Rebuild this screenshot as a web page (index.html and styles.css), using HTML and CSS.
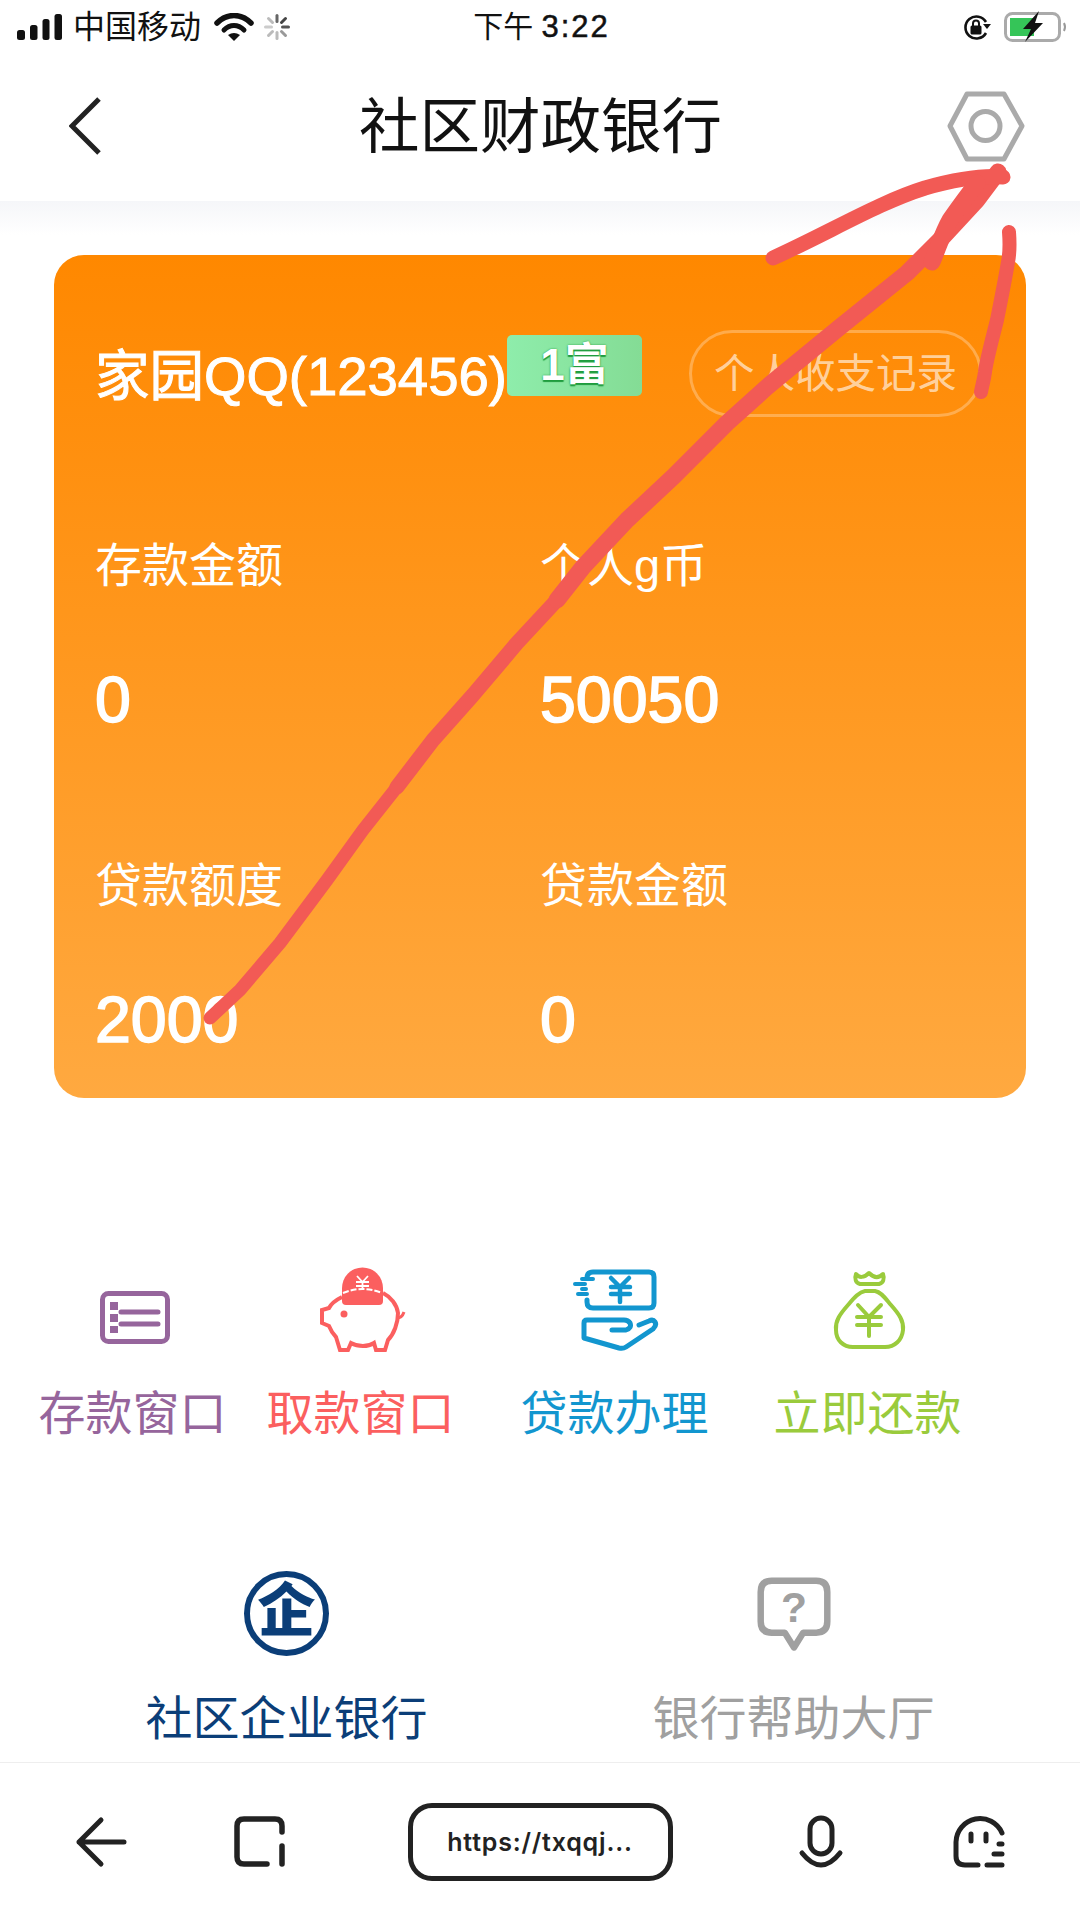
FILE: index.html
```html
<!DOCTYPE html>
<html lang="zh-CN">
<head>
    <meta charset="UTF-8">
    <meta name="viewport" content="width=device-width, initial-scale=1.0">
    <title>社区财政银行</title>
    <link rel="stylesheet" href="styles.css">
</head>
<body>
<div class="screen">
    <div class="status">
        <div class="status-left">
            <svg class="signal" width="45" height="28" viewBox="0 0 45 28" fill="#111">
                <rect x="0" y="17" width="8" height="10" rx="2.5"/>
                <rect x="13" y="12" width="7.5" height="15" rx="2.5"/>
                <rect x="25.5" y="6" width="7" height="21" rx="2.5"/>
                <rect x="37.5" y="1" width="7.5" height="26" rx="2.5"/>
            </svg>
            <span class="carrier">中国移动</span>
            <svg class="wifi" width="40" height="28" viewBox="0 0 40 28" fill="none" stroke="#111" stroke-linecap="round">
                <path d="M3 10C13 0 27 0 37 10" stroke-width="5.5"/>
                <path d="M10 17C16 11 24 11 30 17" stroke-width="5"/>
                <path d="M14 22Q20 18 26 22L20 28Z" fill="#111" stroke="none"/>
            </svg>
            <svg class="spin" width="26" height="26" viewBox="0 0 26 26" stroke-width="3" stroke-linecap="round">
                <line x1="13" y1="1.5" x2="13" y2="7.5" stroke="#666"/>
                <line x1="21.5" y1="4.5" x2="17.5" y2="8.5" stroke="#444"/>
                <line x1="24.5" y1="13" x2="18.5" y2="13" stroke="#555"/>
                <line x1="21.5" y1="21.5" x2="17.5" y2="17.5" stroke="#999"/>
                <line x1="13" y1="24.5" x2="13" y2="18.5" stroke="#bbb"/>
                <line x1="4.5" y1="21.5" x2="8.5" y2="17.5" stroke="#bbb"/>
                <line x1="1.5" y1="13" x2="7.5" y2="13" stroke="#ccc"/>
                <line x1="4.5" y1="4.5" x2="8.5" y2="8.5" stroke="#bbb"/>
            </svg>
        </div>
        <div class="clock">下午 <span class="clock-num">3:22</span></div>
        <div class="status-right">
            <svg width="30" height="28" viewBox="0 0 30 28" fill="none">
                <path d="M24 9A11 11 0 1 0 24 20" stroke="#111" stroke-width="2.6"/>
                <path d="M21 11L29 11L25 16Z" fill="#111"/>
                <rect x="8.5" y="12.5" width="11" height="9" rx="1.5" fill="#111"/>
                <path d="M11 13V10.5A3 3 0 0 1 17 10.5V13" stroke="#111" stroke-width="2"/>
            </svg>
            <svg class="battery" width="62" height="30" viewBox="0 0 62 30" fill="none">
                <rect x="1.5" y="1.5" width="54" height="27" rx="7" stroke="#aaa" stroke-width="3"/>
                <path d="M6 6H30V24H6Z" fill="#35c558"/>
                <path d="M60 11Q62 15 60 19" stroke="#999" stroke-width="2"/>
                <path d="M35 -1L19 17H27L21 30L39 11H31Z" fill="#111"/>
            </svg>
        </div>
    </div>

    <header class="nav">
        <svg class="nav-back" width="32" height="58" viewBox="0 0 32 58" fill="none">
            <path d="M30 2L3 29L30 56" stroke="#222" stroke-width="5"/>
        </svg>
        <h1 class="nav-title">社区财政银行</h1>
        <svg class="nav-gear" width="78" height="71" viewBox="0 0 78 71" fill="none" stroke="#aaa" stroke-width="5" stroke-linejoin="round">
            <path d="M20 3H57L75 35L57 68H20L3 35Z"/>
            <circle cx="38.5" cy="35" r="14.5"/>
        </svg>
    </header>

    <main class="content">
        <section class="card">
            <div class="card-head">
                <span class="card-name">家园QQ(123456)</span>
                <span class="rank">1富</span>
                <a class="record">个人收支记录</a>
            </div>
            <div class="stats">
                <div class="stat"><div class="stat-label">存款金额</div><div class="stat-value">0</div></div>
                <div class="stat"><div class="stat-label">个人g币</div><div class="stat-value">50050</div></div>
                <div class="stat"><div class="stat-label">贷款额度</div><div class="stat-value">2000</div></div>
                <div class="stat"><div class="stat-label">贷款金额</div><div class="stat-value">0</div></div>
            </div>
        </section>

        <div class="actions">
            <div class="action purple">
                <svg width="90" height="90" viewBox="0 0 90 90" fill="none" stroke="#96659c">
                    <rect x="14.5" y="28.5" width="65" height="48" rx="6" stroke-width="5"/>
                    <path d="M22 37h8v8h-8zM22 49h8v8h-8zM22 61h8v7h-8z" fill="#96659c" stroke="none"/>
                    <path d="M33 47H70M33 59H70" stroke-width="5" stroke-linecap="round"/>
                </svg>
                <span>存款窗口</span>
            </div>
            <div class="action coral">
                <svg width="90" height="90" viewBox="0 0 90 90" fill="none" stroke="#fb5f5f">
                    <path d="M26 32C20 35 15 39 13 43L6 45V58L13 61C15 66 17 69 20 72L24 85H32L35 78C42 82 52 82 58 78L60 85H69L72 75C78 69 82 58 82 48C81 40 75 32 67 28" stroke-width="4"/>
                    <path d="M81 53C85 53 87 50 88 47" stroke-width="3"/>
                    <circle cx="28" cy="49" r="3.5" fill="#fb5f5f" stroke="none"/>
                    <path d="M26 23A20.500 20.500 0 0 1 67 23V36Q67 40 63 40H30Q26 40 26 36Z" fill="#fb5f5f" stroke="none"/>
                    <path d="M27 28Q46 20 66 28" stroke="#fff" stroke-width="2" stroke-dasharray="6 2"/>
                    <path d="M41 11L46.500 17L52 11M40 17H53M40 21H53M46.500 17V25" stroke="#fff" stroke-width="1.800"/>
                </svg>
                <span>取款窗口</span>
            </div>
            <div class="action blue">
                <svg width="90" height="90" viewBox="0 0 90 90" fill="none" stroke="#1296cf" stroke-linecap="round" stroke-linejoin="round">
                    <path d="M17 13Q17 7 23 7H79Q84 7 84 12V38Q84 43 79 43H23Q17 43 17 37V35" stroke-width="5"/>
                    <path d="M5 19H15M12 14H23M8 29H17M12 24H16" stroke-width="4"/>
                    <path d="M41 13L50 22L59 13M41 22H60M41 29H60M50 22V37" stroke-width="4.500"/>
                    <path d="M42 65H56Q62 63 60 58Q58 55 54 55H17Q14 55 14 58V73L49 83Q53 84 56 82L83 64Q87 60 85 57Q83 54 79 56L69 60" stroke-width="5"/>
                </svg>
                <span>贷款办理</span>
            </div>
            <div class="action green">
                <svg width="90" height="90" viewBox="0 0 90 90" fill="none" stroke="#9acb3c" stroke-linecap="round" stroke-linejoin="round">
                    <path d="M33 9C36 13 41 13 46 8C51 13 56 13 60 9C62 14 60 18 56 19H37C33 18 31 14 33 9Z" stroke-width="4"/>
                    <path d="M42 26H52C58 27 62 33 68 40C76 49 81 56 80 65C79 75 72 82 62 82H30C20 82 13 75 13 65C12 56 17 49 25 40C31 33 36 27 42 26Z" stroke-width="4"/>
                    <path d="M35 40L46 52L58 40M34 52H58M34 60H58M46 52V71" stroke-width="4"/>
                </svg>
                <span>立即还款</span>
            </div>
        </div>

        <div class="tabs">
            <div class="tab tab-on">
                <div class="tab-logo">企</div>
                <span>社区企业银行</span>
            </div>
            <div class="tab">
                <svg class="tab-help" width="74" height="78" viewBox="0 0 80 84" fill="none">
                    <path d="M16 4H64Q76 4 76 16V48Q76 60 64 60H50L40 76L30 60H16Q4 60 4 48V16Q4 4 16 4Z" stroke="#a0a0a0" stroke-width="7" stroke-linejoin="round"/>
                    <text x="40" y="49" text-anchor="middle" class="help-mark">?</text>
                </svg>
                <span>银行帮助大厅</span>
            </div>
        </div>
    </main>

    <footer class="toolbar">
        <div class="tool-group">
            <svg width="52" height="53" viewBox="0 0 52 53" fill="none" stroke="#222" stroke-width="5" stroke-linecap="round" stroke-linejoin="round">
                <path d="M49 27H4M26 5L4 27L26 49"/>
            </svg>
            <svg width="52" height="53" viewBox="0 0 52 53" fill="none" stroke="#222" stroke-width="5.500" stroke-linecap="round">
                <path d="M49 17V11Q49 4 42 4H11Q4 4 4 11V42Q4 49 11 49H34M49 31V49"/>
            </svg>
        </div>
        <div class="url">https://txqqj...</div>
        <div class="tool-group">
            <svg width="52" height="53" viewBox="0 0 52 53" fill="none" stroke="#222" stroke-width="5" stroke-linecap="round">
                <rect x="15" y="3" width="22" height="36" rx="11"/>
                <path d="M7 38Q26 62 45 38"/>
            </svg>
            <svg width="52" height="53" viewBox="0 0 52 53" fill="none" stroke="#222" stroke-width="5" stroke-linecap="round">
                <path d="M49 18A24 24 0 0 0 3 27V41Q3 50 12 50H25M34 50H49M41 39H49M46 29H49M18 19V26M33 19V26"/>
            </svg>
        </div>
    </footer>

    <!-- hand drawn red arrow on top of the screenshot -->
    <svg class="ink" width="1080" height="1920" viewBox="0 0 1080 1920" fill="none" stroke="#f25a55" stroke-linecap="round" stroke-linejoin="round">
        <path d="M210 1018L240 990L280 943L327 880L363 830L397 787" stroke-width="13"/>
        <path d="M397 787L433 740L473 695L517 643L557 600" stroke-width="15"/>
        <path d="M557 600L583 567L627 520L673 477L727 423L767 387L840 327L907 273L940 240L977 200L998 172" stroke-width="17"/>
        <path d="M773 258C830 232 880 202 925 188C950 181 980 175 1003 177" stroke-width="15"/>
        <path d="M932 262C938 248 943 232 950 220C958 208 968 195 977 183" stroke-width="17"/>
        <path d="M1009 232C1010 245 1010 252 1008 262C1005 280 1000 305 997 320C992 340 986 362 985 372C984 380 982 386 981 392" stroke-width="14"/>
    </svg>
</div>
</body>
</html>
```

FILE: styles.css
```css
* {
    box-sizing: border-box;
}
body {
    margin: 0;
    background-color: #fff;
    font-family: "Liberation Sans", "Noto Sans CJK SC", sans-serif;
}
.screen {
    position: relative;
    width: 1080px;
    height: 1920px;
    overflow: hidden;
    display: flex;
    flex-direction: column;
    background-color: #fff;
}

/* status bar */
.status {
    height: 50px;
    padding: 4px 14px 0 17px;
    display: grid;
    grid-template-columns: 1fr auto 1fr;
    align-items: center;
    color: #111;
}
.status-left {
    display: flex;
    align-items: center;
}
.carrier {
    margin-left: 11px;
    font-size: 32px;
    line-height: 40px;
}
.wifi {
    margin-left: 13px;
}
.spin {
    margin-left: 10px;
}
.clock {
    font-size: 30px;
    line-height: 40px;
}
.clock-num {
    font-size: 31px;
    letter-spacing: 2px;
    -webkit-text-stroke: 0.5px #111;
}
.status-right {
    display: flex;
    justify-content: flex-end;
    align-items: center;
    gap: 12px;
}
.battery {
    overflow: visible;
}

/* top nav */
.nav {
    height: 151px;
    padding-left: 69px;
    padding-right: 55px;
    display: grid;
    grid-template-columns: 290px auto 1fr;
    align-items: center;
    background-color: #fff;
}
.nav-title {
    margin: 0;
    padding-top: 2px;
    font-size: 60.5px;
    font-weight: 400;
    line-height: 80px;
    color: #111;
}
.nav-gear {
    justify-self: end;
    margin-top: 2px;
}

.content {
    flex: 1;
    background: linear-gradient(#f5f6f9, #fff 34px) no-repeat;
    padding-top: 54px;
}

/* orange card */
.card {
    width: 972px;
    height: 843px;
    margin-left: 54px;
    padding: 75px 44px 0 41px;
    border-radius: 30px;
    background: linear-gradient(#ff8800, #ffa940);
    color: #fff;
}
.card-head {
    display: flex;
    align-items: flex-start;
}
.card-name {
    font-size: 54.5px;
    line-height: 94px;
    -webkit-text-stroke: 1px #fff;
}
.rank {
    width: 135px;
    height: 61px;
    margin-top: 5px;
    border-radius: 5px;
    background: linear-gradient(90deg, #8eedab, #84dc95);
    text-align: center;
    font-size: 44px;
    line-height: 60px;
    font-weight: 700;
    text-shadow: 0 2px 1px #1f9c3e, 0 0 2px #1f9c3e;
}
.record {
    width: 293px;
    height: 87px;
    margin-left: auto;
    border: 3px solid rgba(255, 255, 255, 0.28);
    border-radius: 44px;
    text-align: center;
    font-size: 40.5px;
    line-height: 83px;
    color: rgba(255, 255, 255, 0.62);
}
.stats {
    margin-top: 112px;
    display: grid;
    grid-template-columns: 445px 1fr;
    row-gap: 116px;
}
.stat-label {
    font-size: 47px;
    line-height: 60px;
}
.stat-value {
    margin-top: 64px;
    font-size: 64.5px;
    line-height: 80px;
    -webkit-text-stroke: 1.6px #fff;
}

/* four round actions */
.actions {
    margin-top: 167px;
    padding-left: 32px;
    display: grid;
    grid-template-columns: 201px 255px 253px 253px;
}
.action {
    display: flex;
    flex-direction: column;
    align-items: center;
    font-size: 47px;
    line-height: 60px;
}
.action span {
    margin-top: 29px;
    white-space: nowrap;
}
.purple { color: #96659c; }
.coral { color: #fb5f5f; }
.blue { color: #1296cf; }
.green { color: #9acb3c; }

/* bottom tabs */
.tabs {
    margin-top: 127px;
    padding-left: 33px;
    display: grid;
    grid-template-columns: 507px 507px;
}
.tab {
    display: flex;
    flex-direction: column;
    align-items: center;
    font-size: 47px;
    line-height: 60px;
    color: #a0a0a0;
}
.tab-on {
    color: #0b3e78;
}
.tab span {
    margin-top: 33px;
}
.tab-logo {
    width: 85px;
    height: 85px;
    border: 6px solid #0b3e78;
    border-radius: 50%;
    text-align: center;
    font-size: 58px;
    line-height: 68px;
    font-weight: 900;
}
.tab-help {
    margin-top: 6px;
    margin-bottom: 1px;
}
.help-mark {
    font-family: "Liberation Sans", sans-serif;
    font-size: 46px;
    font-weight: 700;
    fill: #a0a0a0;
}

/* browser toolbar */
.toolbar {
    height: 158px;
    padding: 0 75px;
    border-top: 1px solid #eee;
    display: flex;
    justify-content: space-between;
    align-items: center;
    background-color: #fff;
}
.tool-group {
    width: 210px;
    display: flex;
    justify-content: space-between;
}
.url {
    width: 265px;
    height: 78px;
    border: 5px solid #222;
    border-radius: 24px;
    text-align: center;
    font-family: Inter, sans-serif;
    font-size: 25px;
    line-height: 68px;
    font-weight: 600;
    color: #222;
    letter-spacing: 0.8px;
}

.ink {
    position: absolute;
    top: 0;
    left: 0;
    pointer-events: none;
}
```
